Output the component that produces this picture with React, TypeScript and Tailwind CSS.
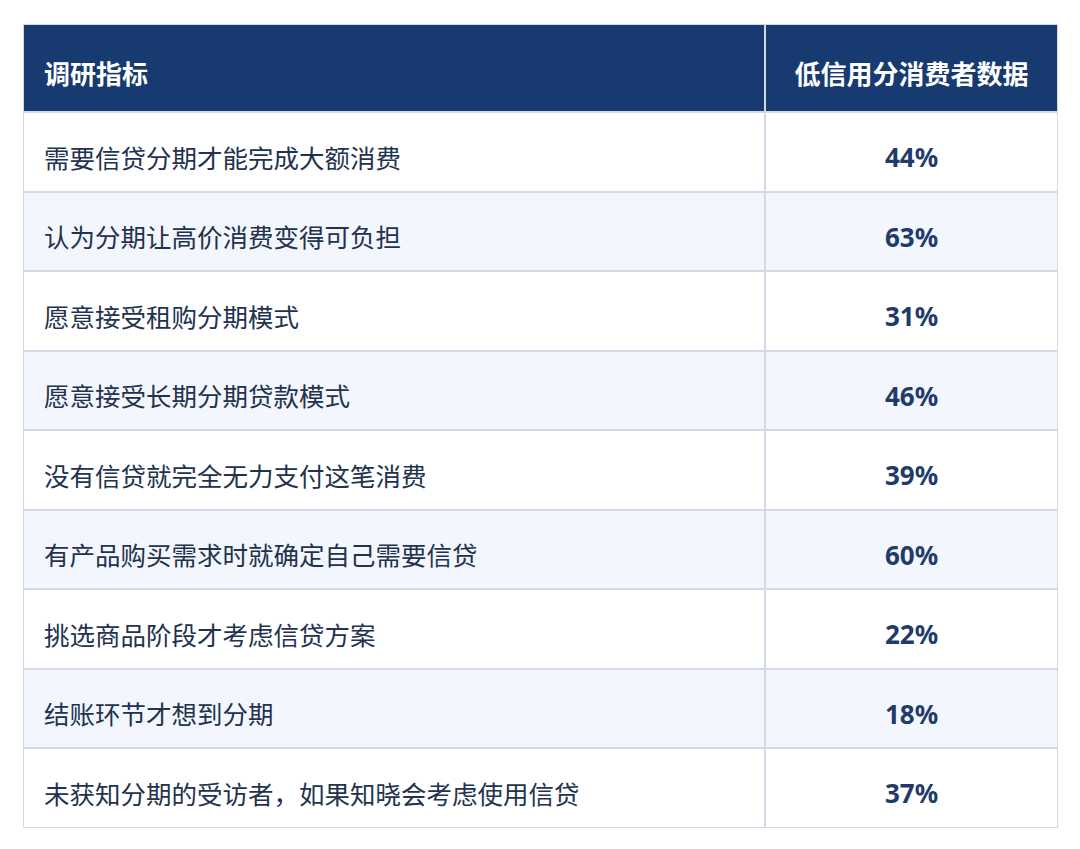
const ROWS: [string, string][] = [
  ['需要信贷分期才能完成大额消费', '44%'],
  ['认为分期让高价消费变得可负担', '63%'],
  ['愿意接受租购分期模式', '31%'],
  ['愿意接受长期分期贷款模式', '46%'],
  ['没有信贷就完全无力支付这笔消费', '39%'],
  ['有产品购买需求时就确定自己需要信贷', '60%'],
  ['挑选商品阶段才考虑信贷方案', '22%'],
  ['结账环节才想到分期', '18%'],
  ['未获知分期的受访者，如果知晓会考虑使用信贷', '37%'],
];

export default function App() {
  return (
    <div
      className="w-[1080px] h-[849px] bg-white pt-[24px] pl-[23px]"
      style={{ fontFamily: '"Noto Sans", "Noto Sans CJK SC", sans-serif' }}
    >
      <div className="w-[1035px] border border-[#d3d9e7]">
        {/* Header */}
        <div className="grid grid-cols-[742px_1fr] h-[86px] bg-[#173a70] text-white font-bold text-[26px]">
          <div className="flex items-center pl-[20px] pt-[12px] border-r-2 border-[#d3d9e7]">调研指标</div>
          <div className="flex items-center justify-center pt-[12px]">低信用分消费者数据</div>
        </div>

        {ROWS.map(([label, value], i) => (
          <div
            key={label}
            className={`grid grid-cols-[742px_1fr] h-[79.5px] border-t-2 border-[#d3d9e7] ${
              i % 2 === 1 ? 'bg-[#f3f6fc]' : 'bg-white'
            }`}
          >
            <div className="flex items-center pl-[20px] pt-[12px] border-r-2 border-[#d3d9e7] text-[25.5px] text-[#22324f]">
              {label}
            </div>
            <div className="flex items-center justify-center pt-[12px] text-[26px] font-bold text-[#1f3b6b]">
              {value}
            </div>
          </div>
        ))}
      </div>
    </div>
  );
}
